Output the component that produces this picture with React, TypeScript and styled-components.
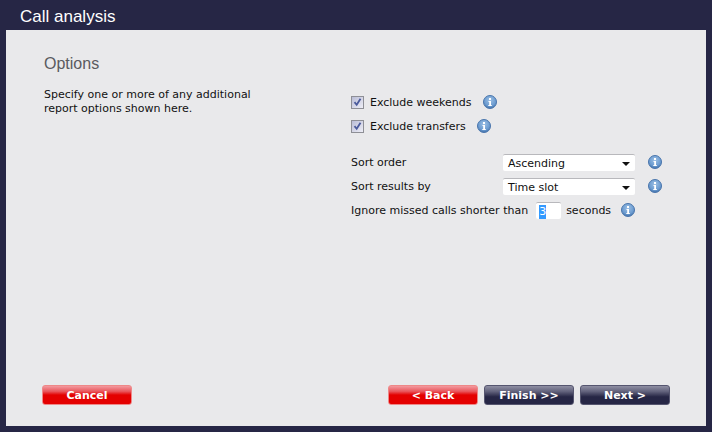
import React from "react";
import styled, { createGlobalStyle } from "styled-components";

const GlobalStyle = createGlobalStyle`
  html, body {
    margin: 0;
    padding: 0;
  }
`;

const InfoIcon = () => (
  <InfoSvg viewBox="0 0 14 14" aria-hidden="true">
    <defs>
      <radialGradient id="infoFill" cx="50%" cy="35%" r="65%">
        <stop offset="0%" stopColor="#9dc0e4" />
        <stop offset="70%" stopColor="#6b9bd0" />
        <stop offset="100%" stopColor="#3f6ea8" />
      </radialGradient>
    </defs>
    <circle cx="7" cy="7" r="6.5" fill="url(#infoFill)" stroke="#4a76ac" strokeWidth="1" />
    <rect x="6" y="3" width="2" height="2" fill="#fff" />
    <path d="M5.5 6h2.5v4h.8v1H5.3v-1h.9V7h-.7z" fill="#fff" />
  </InfoSvg>
);

const CheckBox = () => (
  <CheckFrame>
    <svg width="11" height="11" viewBox="0 0 11 11" aria-hidden="true">
      <path d="M2.5 5.2l2.2 2.6 3.8-6" fill="none" stroke="#4a5a9c" strokeWidth="1.8" />
    </svg>
  </CheckFrame>
);

const App = () => {
  return (
    <Frame>
      <GlobalStyle />
      <Header>Call analysis</Header>
      <Panel>
        <Main>
          <Intro>
            <Heading>Options</Heading>
            <Description>
              Specify one or more of any additional
              <br />
              report options shown here.
            </Description>
          </Intro>
          <Form>
            <CheckRow>
              <CheckBox />
              <Label>Exclude weekends</Label>
              <InfoIcon />
            </CheckRow>
            <CheckRow>
              <CheckBox />
              <Label>Exclude transfers</Label>
              <InfoIcon />
            </CheckRow>
            <FieldRow $first>
              <FieldLabel>Sort order</FieldLabel>
              <Dropdown>
                Ascending
                <Arrow />
              </Dropdown>
              <InfoIcon />
            </FieldRow>
            <FieldRow>
              <FieldLabel>Sort results by</FieldLabel>
              <Dropdown>
                Time slot
                <Arrow />
              </Dropdown>
              <InfoIcon />
            </FieldRow>
            <IgnoreRow>
              <Label>Ignore missed calls shorter than</Label>
              <NumberBox>
                <Selected>3</Selected>
              </NumberBox>
              <Label>seconds</Label>
              <InfoIcon />
            </IgnoreRow>
          </Form>
        </Main>
        <Footer>
          <WizardButton $variant="red">Cancel</WizardButton>
          <ButtonGroup>
            <WizardButton $variant="red">&lt; Back</WizardButton>
            <WizardButton $variant="navy">Finish &gt;&gt;</WizardButton>
            <WizardButton $variant="navy">Next &gt;</WizardButton>
          </ButtonGroup>
        </Footer>
      </Panel>
    </Frame>
  );
};

export default App;

const Frame = styled.div`
  width: 712px;
  height: 432px;
  box-sizing: border-box;
  padding: 0 6px 6px;
  display: flex;
  flex-direction: column;
  background-color: #262645;
  font-family: "DejaVu Sans", sans-serif;
  font-size: 11px;
  color: #111;
`;

const Header = styled.div`
  height: 30px;
  flex-shrink: 0;
  padding-left: 14px;
  line-height: 33px;
  font-family: "Liberation Sans", Arial, sans-serif;
  font-size: 17px;
  color: #fff;
`;

const Panel = styled.div`
  flex: 1;
  display: flex;
  flex-direction: column;
  padding: 0 36px 21px;
  background-color: #e9e9eb;
`;

const Main = styled.div`
  flex: 1;
  display: flex;
`;

const Intro = styled.div`
  width: 309px;
  flex-shrink: 0;
  padding-left: 2px;
  box-sizing: border-box;
`;

const Heading = styled.h2`
  margin: 24px 0 0;
  font-family: "Liberation Sans", Arial, sans-serif;
  font-size: 16px;
  font-weight: normal;
  line-height: 20px;
  color: #5a5a60;
`;

const Description = styled.p`
  margin: 14px 0 0;
  line-height: 14px;
`;

const Form = styled.div`
  padding-top: 60px;
  display: flex;
  flex-direction: column;
`;

const CheckRow = styled.div`
  height: 24px;
  display: flex;
  align-items: center;
  gap: 6px;
`;

const CheckFrame = styled.span`
  width: 13px;
  height: 13px;
  box-sizing: border-box;
  display: flex;
  align-items: center;
  justify-content: center;
  border: 1px solid #8e8f96;
  background: linear-gradient(135deg, #b9bcd6, #eeeef6);
`;

const Label = styled.span`
  white-space: nowrap;
`;

const InfoSvg = styled.svg`
  width: 14px;
  height: 14px;
  flex-shrink: 0;
  margin-left: 5px;
`;

const FieldRow = styled.div<{ $first?: boolean }>`
  height: 24px;
  display: flex;
  align-items: center;
  margin-top: ${(props) => (props.$first ? "12px" : "0")};
`;

const FieldLabel = styled.span`
  width: 152px;
  flex-shrink: 0;
`;

const Dropdown = styled.div`
  position: relative;
  width: 132px;
  height: 17px;
  box-sizing: border-box;
  margin-right: 8px;
  padding-left: 5px;
  line-height: 17px;
  background-color: #fff;
  border-top: 1px solid #b8b8bc;
  border-radius: 2px;
  color: #111;
`;

const Arrow = styled.span`
  position: absolute;
  right: 5px;
  top: 7px;
  width: 0;
  height: 0;
  border-left: 4px solid transparent;
  border-right: 4px solid transparent;
  border-top: 4px solid #111;
`;

const IgnoreRow = styled.div`
  height: 24px;
  display: flex;
  align-items: center;
  gap: 5px;
`;

const NumberBox = styled.div`
  width: 25px;
  height: 17px;
  box-sizing: border-box;
  margin-left: 3px;
  padding-left: 3px;
  line-height: 17px;
  background-color: #fff;
  border-top: 1px solid #b8b8bc;
  border-radius: 2px;
`;

const Selected = styled.span`
  display: inline-block;
  line-height: 14px;
  background-color: #3399ff;
  color: #fff;
`;

const Footer = styled.div`
  display: flex;
  justify-content: space-between;
  padding-right: 0;
`;

const ButtonGroup = styled.div`
  display: flex;
  gap: 6px;
`;

const WizardButton = styled.button<{ $variant: "red" | "navy" }>`
  width: 90px;
  height: 20px;
  padding: 0;
  border: 1px solid ${(props) => (props.$variant === "red" ? "#e88" : "#55556f")};
  border-radius: 3px;
  background: ${(props) =>
    props.$variant === "red"
      ? "linear-gradient(#f39a9f 0%, #e9565c 30%, #e40000 50%, #e40000 100%)"
      : "linear-gradient(#8f8fa3 0%, #63637d 30%, #262645 60%, #262645 100%)"};
  font-family: "DejaVu Sans", sans-serif;
  font-size: 11px;
  font-weight: bold;
  line-height: 17px;
  color: #fff;
`;
